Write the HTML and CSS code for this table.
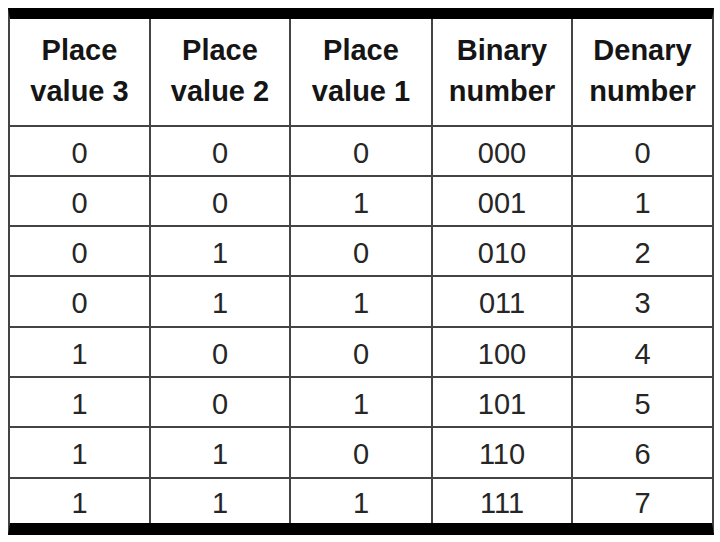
FILE: index.html
```html
<!DOCTYPE html>
<html>
<head>
<meta charset="utf-8">
<link rel="stylesheet" href="styles.css">
</head>
<body>
<div class="page">
  <div class="table">
    <div class="cell head">Place<br>value 3</div>
    <div class="cell head">Place<br>value 2</div>
    <div class="cell head">Place<br>value 1</div>
    <div class="cell head">Binary<br>number</div>
    <div class="cell head">Denary<br>number</div>

    <div class="cell">0</div><div class="cell">0</div><div class="cell">0</div><div class="cell">000</div><div class="cell">0</div>
    <div class="cell">0</div><div class="cell">0</div><div class="cell">1</div><div class="cell">001</div><div class="cell">1</div>
    <div class="cell">0</div><div class="cell">1</div><div class="cell">0</div><div class="cell">010</div><div class="cell">2</div>
    <div class="cell">0</div><div class="cell">1</div><div class="cell">1</div><div class="cell">011</div><div class="cell">3</div>
    <div class="cell">1</div><div class="cell">0</div><div class="cell">0</div><div class="cell">100</div><div class="cell">4</div>
    <div class="cell">1</div><div class="cell">0</div><div class="cell">1</div><div class="cell">101</div><div class="cell">5</div>
    <div class="cell">1</div><div class="cell">1</div><div class="cell">0</div><div class="cell">110</div><div class="cell">6</div>
    <div class="cell">1</div><div class="cell">1</div><div class="cell">1</div><div class="cell">111</div><div class="cell">7</div>
  </div>
</div>
</body>
</html>
```
FILE: styles.css
```css
html, body {
  margin: 0;
  padding: 0;
  background: #ffffff;
}

.page {
  padding: 8px 0 0 8px;
}

.table {
  width: 706px;
  box-sizing: border-box;
  display: grid;
  grid-template-columns: 139px 138px 140px 138px 139px;
  grid-template-rows: 106px 48px 48px 48px 49px 48px 48px 49px 44px;
  gap: 2px;
  background: #444444;
  border-top: 11px solid #000000;
  border-bottom: 12px solid #000000;
  border-left: 2px solid #444444;
  border-right: 2px solid #444444;
  font-family: "Liberation Sans", Arial, sans-serif;
}

.cell {
  background: #ffffff;
  display: flex;
  align-items: center;
  justify-content: center;
  text-align: center;
  font-size: 29px;
  color: #262626;
  padding-top: 4px;
  box-sizing: border-box;
}

.head {
  font-weight: bold;
  color: #151515;
  line-height: 41px;
  padding-top: 0;
  padding-bottom: 3px;
}
```
